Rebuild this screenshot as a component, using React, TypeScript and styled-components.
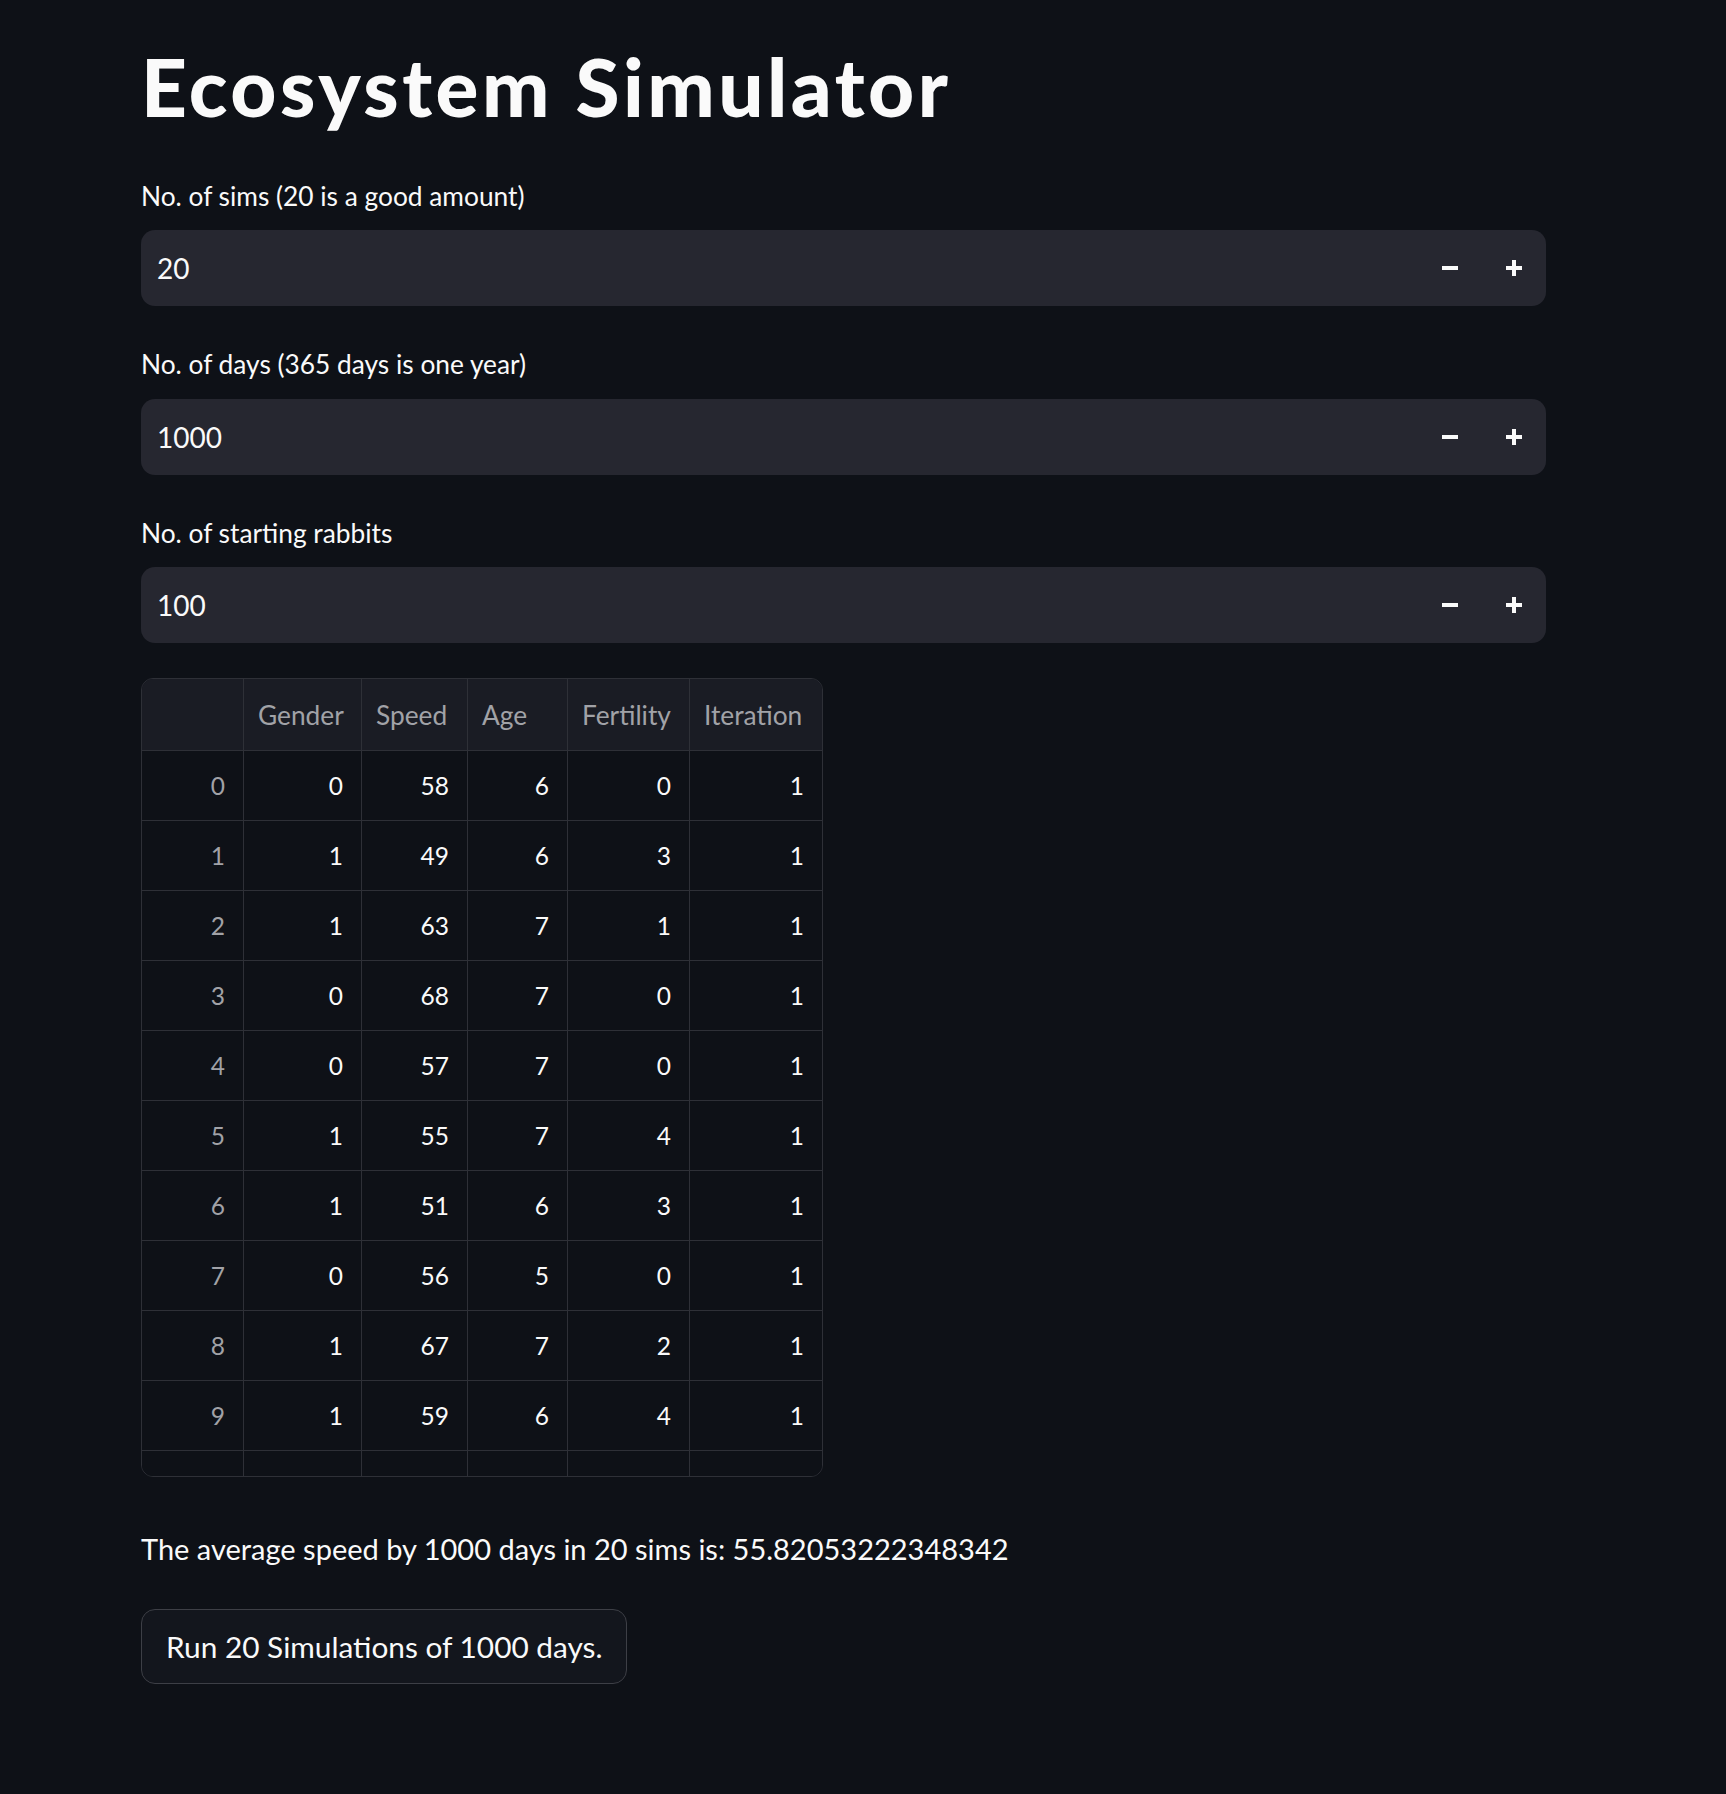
import React from "react";
import styled, { createGlobalStyle } from "styled-components";

const Global = createGlobalStyle`
  html, body {
    margin: 0;
    padding: 0;
    background: #0e1117;
  }
  body {
    font-family: Lato, "Noto Sans", sans-serif;
    color: #fafafa;
  }
  * { box-sizing: border-box; }
`;

const Page = styled.main`
  width: 1726px;
  min-height: 1794px;
  padding: 40px 0 0 141px;
`;

const Content = styled.div`
  width: 1405px;
  display: flex;
  flex-direction: column;
  align-items: flex-start;
`;

const Title = styled.h1`
  margin: 0 0 47px;
  font-size: 80px;
  line-height: 1.17;
  font-weight: 900;
  letter-spacing: 3.5px;
  color: #fafafa;
`;

const Field = styled.div`
  width: 100%;
  display: flex;
  flex-direction: column;
  margin-bottom: 43px;
`;

const Label = styled.label`
  font-size: 26.3px;
  line-height: 30px;
  color: #fafafa;
  margin-bottom: 19.5px;
`;

const InputBox = styled.div`
  height: 76px;
  width: 100%;
  background: #262730;
  border-radius: 14px;
  display: flex;
  align-items: center;
`;

const Value = styled.div`
  flex: 1;
  padding-left: 16px;
  font-size: 28px;
  color: #fafafa;
`;

const StepButton = styled.button`
  width: 64px;
  height: 100%;
  border: none;
  background: transparent;
  padding: 0;
  display: flex;
  align-items: center;
  justify-content: center;
  color: #fafafa;
  cursor: pointer;
`;

const Table = styled.div`
  margin-top: -8px;
  border: 1px solid #2e3037;
  border-radius: 12px;
  overflow: hidden;
  display: flex;
  flex-direction: column;
  margin-bottom: 55px;
`;

const COLS = "102px 118px 106px 100px 122px 132px";

const Row = styled.div<{ $header?: boolean; $h: number }>`
  display: grid;
  grid-template-columns: ${COLS};
  height: ${(p) => p.$h}px;
  background: ${(p) => (p.$header ? "#1a1c24" : "#0e1117")};
  border-bottom: 1px solid #2e3037;
  &:last-child {
    border-bottom: none;
  }
`;

const Cell = styled.div<{ $head?: boolean; $index?: boolean }>`
  border-right: 1px solid #2e3037;
  display: flex;
  align-items: center;
  justify-content: ${(p) => (p.$head ? "flex-start" : "flex-end")};
  padding: ${(p) => (p.$head ? "0 0 0 14px" : "0 18px 0 0")};
  font-size: ${(p) => (p.$head ? "26.3px" : "24.5px")};
  color: ${(p) => (p.$head || p.$index ? "#a1a2a7" : "#fafafa")};
  &:last-child {
    border-right: none;
  }
`;

const Paragraph = styled.p`
  margin: 0 0 42px;
  font-size: 29px;
  line-height: 1.2;
  color: #fafafa;
`;

const Button = styled.button`
  height: 75px;
  padding: 0 24px;
  border: 1px solid #3d3f46;
  border-radius: 14px;
  background: #13161d;
  color: #fafafa;
  font-family: Lato, "Noto Sans", sans-serif;
  font-size: 29.8px;
  display: flex;
  align-items: center;
  cursor: pointer;
`;

const Minus = () => (
  <svg width="16" height="16" viewBox="0 0 16 16">
    <rect x="0" y="6" width="16" height="4" fill="#fafafa" />
  </svg>
);

const Plus = () => (
  <svg width="16" height="16" viewBox="0 0 16 16">
    <rect x="0" y="6" width="16" height="4" fill="#fafafa" />
    <rect x="6" y="0" width="4" height="16" fill="#fafafa" />
  </svg>
);

const NumberInput = ({ label, value }: { label: string; value: string }) => (
  <Field>
    <Label>{label}</Label>
    <InputBox>
      <Value>{value}</Value>
      <StepButton aria-label="decrement">
        <Minus />
      </StepButton>
      <StepButton aria-label="increment">
        <Plus />
      </StepButton>
    </InputBox>
  </Field>
);

const headers = ["", "Gender", "Speed", "Age", "Fertility", "Iteration"];
const rows = [
  [0, 0, 58, 6, 0, 1],
  [1, 1, 49, 6, 3, 1],
  [2, 1, 63, 7, 1, 1],
  [3, 0, 68, 7, 0, 1],
  [4, 0, 57, 7, 0, 1],
  [5, 1, 55, 7, 4, 1],
  [6, 1, 51, 6, 3, 1],
  [7, 0, 56, 5, 0, 1],
  [8, 1, 67, 7, 2, 1],
  [9, 1, 59, 6, 4, 1],
];

export default function App() {
  return (
    <>
      <Global />
      <Page>
        <Content>
          <Title>Ecosystem Simulator</Title>
          <NumberInput label="No. of sims (20 is a good amount)" value="20" />
          <NumberInput label="No. of days (365 days is one year)" value="1000" />
          <NumberInput label="No. of starting rabbits" value="100" />
          <Table>
            <Row $header $h={72}>
              {headers.map((h, i) => (
                <Cell key={i} $head>
                  {h}
                </Cell>
              ))}
            </Row>
            {rows.map((r, ri) => (
              <Row key={ri} $h={70}>
                {r.map((v, ci) => (
                  <Cell key={ci} $index={ci === 0}>
                    {v}
                  </Cell>
                ))}
              </Row>
            ))}
            <Row $h={25}>
              {headers.map((_, i) => (
                <Cell key={i} />
              ))}
            </Row>
          </Table>
          <Paragraph>
            The average speed by 1000 days in 20 sims is: 55.82053222348342
          </Paragraph>
          <Button>Run 20 Simulations of 1000 days.</Button>
        </Content>
      </Page>
    </>
  );
}
